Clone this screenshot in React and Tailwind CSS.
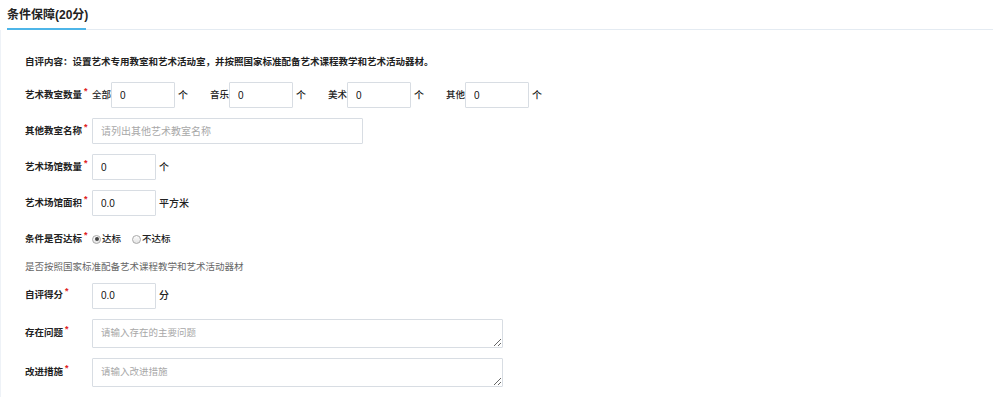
import React from 'react';

const FONT = { fontFamily: '"Liberation Sans", "Noto Sans CJK SC", sans-serif' };

function Label({ children, required = true }) {
  return (
    <div className="w-[67px] shrink-0 flex items-start text-[9.5px] font-semibold text-[#222]">
      <span>{children}</span>
      {required && <span className="text-[#e02020] text-[9px] leading-none ml-[2px] -mt-[1px]">*</span>}
    </div>
  );
}

function Box({ value, placeholder, w = 'w-[64px]' }) {
  return (
    <input
      readOnly
      value={value ?? ''}
      placeholder={placeholder}
      className={`${w} h-[26px] border border-[#d8dde3] rounded-[1px] px-[8px] text-[10px] text-[#111] placeholder:text-[#a8a8a8] outline-none bg-white`}
    />
  );
}

function Unit({ children }) {
  return <span className="ml-[3px] text-[10px] font-medium text-[#222]">{children}</span>;
}

function Radio({ checked, children }) {
  return (
    <span className="flex items-center">
      <span className="w-[9px] h-[9px] rounded-full border border-[#a9a9a9] bg-gradient-to-b from-[#fdfdfd] to-[#e4e4e4] flex items-center justify-center">
        {checked && <span className="w-[4px] h-[4px] rounded-full bg-[#444]" />}
      </span>
      <span className="ml-[1px] text-[9.5px] font-medium text-[#222]">{children}</span>
    </span>
  );
}

const GROUPS = [
  { name: '全部', value: '0' },
  { name: '音乐', value: '0' },
  { name: '美术', value: '0' },
  { name: '其他', value: '0' },
];

export default function App() {
  return (
    <div className="w-[1000px] h-[397px] bg-white overflow-hidden" style={FONT}>
      {/* tab header */}
      <div className="mx-[7px] h-[30px] border-b border-[#e4ebf2] flex items-end">
        <div className="h-full flex items-center border-b-2 border-[#4db5e8] -mb-px w-[79px] whitespace-nowrap text-[12px] font-bold text-[#222]">
          条件保障(20分)
        </div>
      </div>

      <div className="h-[367px] border-l border-[#eef2f7] pl-[24px] pt-[25px]">
        <div className="h-[14px] flex items-center text-[9.5px] font-bold text-[#222]">
          自评内容：设置艺术专用教室和艺术活动室，并按照国家标准配备艺术课程教学和艺术活动器材。
        </div>

        {/* 艺术教室数量 */}
        <div className="mt-[13px] h-[26px] flex items-center">
          <Label>艺术教室数量</Label>
          <div className="flex items-center">
            {GROUPS.map((g) => (
              <div key={g.name} className="w-[118px] flex items-center">
                <span className="w-[19px] text-[9.5px] font-medium text-[#222]">{g.name}</span>
                <Box value={g.value} />
                <Unit>个</Unit>
              </div>
            ))}
          </div>
        </div>

        <div className="mt-[10px] h-[26px] flex items-center">
          <Label>其他教室名称</Label>
          <Box placeholder="请列出其他艺术教室名称" w="w-[271px]" />
        </div>

        <div className="mt-[10px] h-[26px] flex items-center">
          <Label>艺术场馆数量</Label>
          <Box value="0" />
          <Unit>个</Unit>
        </div>

        <div className="mt-[10px] h-[26px] flex items-center">
          <Label>艺术场馆面积</Label>
          <Box value="0.0" />
          <Unit>平方米</Unit>
        </div>

        <div className="mt-[10px] h-[26px] flex items-center">
          <Label>条件是否达标</Label>
          <div className="flex items-center gap-[11px]">
            <Radio checked>达标</Radio>
            <Radio>不达标</Radio>
          </div>
        </div>

        <div className="mt-[8px] h-[14px] flex items-center text-[9.5px] text-[#666]">
          是否按照国家标准配备艺术课程教学和艺术活动器材
        </div>

        <div className="mt-[8px] h-[27px] flex items-center">
          <Label>自评得分</Label>
          <Box value="0.0" />
          <Unit>分</Unit>
        </div>

        <div className="mt-[10px] h-[29px] flex items-center">
          <Label>存在问题</Label>
          <textarea
            readOnly
            placeholder="请输入存在的主要问题"
            className="w-[411px] h-[29px] border border-[#d8dde3] rounded-[1px] px-[8px] py-[6px] text-[9.5px] leading-[14px] placeholder:text-[#a8a8a8] outline-none resize-y"
          />
        </div>

        <div className="mt-[10px] h-[29px] flex items-center">
          <Label>改进措施</Label>
          <textarea
            readOnly
            placeholder="请输入改进措施"
            className="w-[411px] h-[29px] border border-[#d8dde3] rounded-[1px] px-[8px] py-[6px] text-[9.5px] leading-[14px] placeholder:text-[#a8a8a8] outline-none resize-y"
          />
        </div>
      </div>
    </div>
  );
}
